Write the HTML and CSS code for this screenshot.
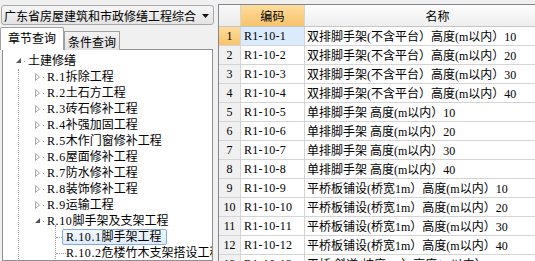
FILE: index.html
```html
<!DOCTYPE html>
<html lang="zh-CN">
<head>
  <meta charset="UTF-8">
  <title>定额查询</title>
  <link rel="stylesheet" href="styles.css">
</head>
<body>
  <div class="left">
    <div class="combo">
      <span class="combo-text">广东省房屋建筑和市政修缮工程综合</span>
      <svg class="combo-arrow" width="7" height="4"><polygon points="0,0 7,0 3.5,4" fill="#111"/></svg>
    </div>

    <div class="tabs">
      <div class="tab active">章节查询</div>
      <div class="tab">条件查询</div>
    </div>

    <div class="tree">
      <div class="row lv0">
        <svg class="exp" width="13" height="16"><polygon points="6,5 6,10 1,10" fill="#555"/><rect x="9" y="8" width="1" height="1" fill="#999"/></svg>
        <span class="label">土建修缮</span>
      </div>
      <div class="children">
        <div class="row lv1"><svg class="exp" width="13" height="16"><polygon points="1.5,4.5 5.5,8 1.5,11.5" fill="none" stroke="#a8a8a8"/><rect x="9" y="8" width="1" height="1" fill="#999"/></svg><span class="label"><span class="no">R.1</span>拆除工程</span></div>
        <div class="row lv1"><svg class="exp" width="13" height="16"><polygon points="1.5,4.5 5.5,8 1.5,11.5" fill="none" stroke="#a8a8a8"/><rect x="9" y="8" width="1" height="1" fill="#999"/></svg><span class="label"><span class="no">R.2</span>土石方工程</span></div>
        <div class="row lv1"><svg class="exp" width="13" height="16"><polygon points="1.5,4.5 5.5,8 1.5,11.5" fill="none" stroke="#a8a8a8"/><rect x="9" y="8" width="1" height="1" fill="#999"/></svg><span class="label"><span class="no">R.3</span>砖石修补工程</span></div>
        <div class="row lv1"><svg class="exp" width="13" height="16"><polygon points="1.5,4.5 5.5,8 1.5,11.5" fill="none" stroke="#a8a8a8"/><rect x="9" y="8" width="1" height="1" fill="#999"/></svg><span class="label"><span class="no">R.4</span>补强加固工程</span></div>
        <div class="row lv1"><svg class="exp" width="13" height="16"><polygon points="1.5,4.5 5.5,8 1.5,11.5" fill="none" stroke="#a8a8a8"/><rect x="9" y="8" width="1" height="1" fill="#999"/></svg><span class="label"><span class="no">R.5</span>木作门窗修补工程</span></div>
        <div class="row lv1"><svg class="exp" width="13" height="16"><polygon points="1.5,4.5 5.5,8 1.5,11.5" fill="none" stroke="#a8a8a8"/><rect x="9" y="8" width="1" height="1" fill="#999"/></svg><span class="label"><span class="no">R.6</span>屋面修补工程</span></div>
        <div class="row lv1"><svg class="exp" width="13" height="16"><polygon points="1.5,4.5 5.5,8 1.5,11.5" fill="none" stroke="#a8a8a8"/><rect x="9" y="8" width="1" height="1" fill="#999"/></svg><span class="label"><span class="no">R.7</span>防水修补工程</span></div>
        <div class="row lv1"><svg class="exp" width="13" height="16"><polygon points="1.5,4.5 5.5,8 1.5,11.5" fill="none" stroke="#a8a8a8"/><rect x="9" y="8" width="1" height="1" fill="#999"/></svg><span class="label"><span class="no">R.8</span>装饰修补工程</span></div>
        <div class="row lv1"><svg class="exp" width="13" height="16"><polygon points="1.5,4.5 5.5,8 1.5,11.5" fill="none" stroke="#a8a8a8"/><rect x="9" y="8" width="1" height="1" fill="#999"/></svg><span class="label"><span class="no">R.9</span>运输工程</span></div>
        <div class="row lv1"><svg class="exp" width="13" height="16"><polygon points="6,5 6,10 1,10" fill="#555"/><rect x="9" y="8" width="1" height="1" fill="#999"/></svg><span class="label"><span class="no">R.10</span>脚手架及支架工程</span></div>
        <div class="children sub">
          <div class="row lv2"><span class="hline"></span><span class="label selected"><span class="no">R.10.1</span>脚手架工程</span></div>
          <div class="row lv2"><span class="hline long"></span><span class="label"><span class="no">R.10.2</span>危楼竹木支架搭设工程</span></div>
        </div>
      </div>
    </div>
  </div>

  <div class="splitter"></div>

  <div class="grid">
    <div class="grow head">
      <div class="cell num"></div>
      <div class="cell code hot">编码</div>
      <div class="cell name">名称</div>
    </div>
    <div class="grow">
      <div class="cell num hot">1</div>
      <div class="cell code current">R1-10-1</div>
      <div class="cell name">双排脚手架(不含平台）高度(m以内）10</div>
    </div>
    <div class="grow"><div class="cell num">2</div><div class="cell code">R1-10-2</div><div class="cell name">双排脚手架(不含平台）高度(m以内）20</div></div>
    <div class="grow"><div class="cell num">3</div><div class="cell code">R1-10-3</div><div class="cell name">双排脚手架(不含平台）高度(m以内）30</div></div>
    <div class="grow"><div class="cell num">4</div><div class="cell code">R1-10-4</div><div class="cell name">双排脚手架(不含平台）高度(m以内）40</div></div>
    <div class="grow"><div class="cell num">5</div><div class="cell code">R1-10-5</div><div class="cell name">单排脚手架 高度(m以内）10</div></div>
    <div class="grow"><div class="cell num">6</div><div class="cell code">R1-10-6</div><div class="cell name">单排脚手架 高度(m以内）20</div></div>
    <div class="grow"><div class="cell num">7</div><div class="cell code">R1-10-7</div><div class="cell name">单排脚手架 高度(m以内）30</div></div>
    <div class="grow"><div class="cell num">8</div><div class="cell code">R1-10-8</div><div class="cell name">单排脚手架 高度(m以内）40</div></div>
    <div class="grow"><div class="cell num">9</div><div class="cell code">R1-10-9</div><div class="cell name">平桥板铺设(桥宽1m）高度(m以内）10</div></div>
    <div class="grow"><div class="cell num">10</div><div class="cell code">R1-10-10</div><div class="cell name">平桥板铺设(桥宽1m）高度(m以内）20</div></div>
    <div class="grow"><div class="cell num">11</div><div class="cell code">R1-10-11</div><div class="cell name">平桥板铺设(桥宽1m）高度(m以内）30</div></div>
    <div class="grow"><div class="cell num">12</div><div class="cell code">R1-10-12</div><div class="cell name">平桥板铺设(桥宽1m）高度(m以内）40</div></div>
    <div class="grow"><div class="cell num">13</div><div class="cell code">R1-10-13</div><div class="cell name">平桥 斜道(坡度1:3）高度(m以内）10</div></div>
  </div>
</body>
</html>
```

FILE: styles.css
```css
body {
  margin: 0;
  width: 535px;
  height: 261px;
  overflow: hidden;
  display: flex;
  background-color: #f0f0f0;
  color: #000;
  font-family: "Liberation Serif", "Noto Sans CJK SC", serif;
  font-size: 12px;
}

/* left side: library selector, tabs and chapter tree */
.left {
  width: 215px;
  flex: 0 0 215px;
  display: flex;
  flex-direction: column;
  padding-top: 5px;
  box-sizing: border-box;
}

.combo {
  height: 20px;
  margin: 0 1px 0 1px;
  border: 1px solid #a9a9a9;
  border-radius: 3px;
  background: linear-gradient(#f6f6f6, #e3e3e3);
  display: flex;
  align-items: center;
  justify-content: space-between;
  padding: 0 4px 0 2px;
  box-sizing: border-box;
  font-family: "Noto Sans CJK SC", sans-serif;
}

.combo-arrow {
  margin-top: 1px;
}

.tabs {
  display: flex;
  align-items: flex-end;
  height: 22px;
  margin-top: 3px;
  position: relative;
  z-index: 1;
  margin-bottom: -1px;
}

.tab {
  height: 19px;
  padding: 0 3px;
  border: 1px solid #a0a0a0;
  border-bottom: none;
  background: linear-gradient(#f2f2f2, #e2e2e2);
  font-family: "Noto Sans CJK SC", sans-serif;
  line-height: 19px;
  box-sizing: border-box;
}

.tab.active {
  height: 23px;
  padding: 0 7px;
  background: #fff;
  line-height: 20px;
  border-radius: 2px 2px 0 0;
}

.tree {
  flex: 1;
  margin-left: 2px;
  margin-right: 2px;
  border: 1px solid #8e8f8f;
  background: #fff;
  padding: 3px 3px 0 0;
  overflow: hidden;
}

.row {
  display: flex;
  align-items: center;
  height: 16px;
  white-space: nowrap;
}

.lv0 {
  padding-left: 12px;
}

.lv1 {
  padding-left: 15px;
}

.exp {
  flex: 0 0 13px;
}

.children {
  margin-left: 15px;
  border-left: 1px dotted #9a9a9a;
}

.children.sub {
  margin-left: 36px;
  margin-top: -4px;
  padding-top: 4px;
}

.hline {
  flex: 0 0 6px;
  border-top: 1px dotted #9a9a9a;
}

.hline.long {
  flex-basis: 10px;
}

.label {
  line-height: 14px;
}

.no {
  letter-spacing: 0.6px;
}

.selected {
  border: 1px solid #84acdd;
  border-radius: 2px;
  background: linear-gradient(#f3f8fe, #dcebfc);
  padding: 0 4px 0 3px;
}

.splitter {
  flex: 0 0 3px;
}

/* right side: quota item grid */
.grid {
  flex: 1;
  margin-top: 4px;
  border-left: 1px solid #828790;
  border-top: 1px solid #828790;
  background: #fff;
  overflow: hidden;
}

.grow {
  display: flex;
  height: 19px;
  border-bottom: 1px solid #d4d4d4;
  box-sizing: border-box;
}

.grow.head {
  height: 22px;
  border-bottom-color: #c5c5c5;
}

.cell {
  display: flex;
  align-items: center;
  border-right: 1px solid #d4d4d4;
  box-sizing: border-box;
  white-space: nowrap;
  overflow: hidden;
}

.num {
  flex: 0 0 22px;
  justify-content: center;
  background: #f0f0f0;
}

.code {
  flex: 0 0 64px;
  padding-left: 3px;
  letter-spacing: 0.3px;
}

.name {
  flex: 0 0 266px;
  padding-left: 2px;
}

.head .cell {
  justify-content: center;
  background: linear-gradient(#fdfdfd, #eeeeee);
  font-family: "Noto Sans CJK SC", sans-serif;
  padding-left: 0;
}

.head .num {
  background: linear-gradient(#f8f8f8, #ececec);
}

.head .code.hot,
.num.hot {
  background: linear-gradient(#fddc9c, #f8c36c);
}

.current {
  background: #dcebfc;
}
```
